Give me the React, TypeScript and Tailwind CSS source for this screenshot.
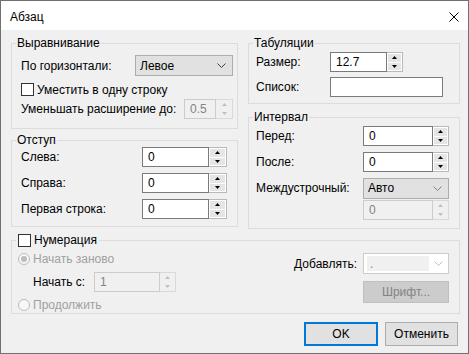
import React from "react";

function Arrow({ up, color }: { up?: boolean; color: string }) {
  return (
    <svg width="5" height="3" viewBox="0 0 5 3" className="block">
      <path d={up ? "M0 3H5L2.5 0Z" : "M0 0H5L2.5 3Z"} fill={color} />
    </svg>
  );
}

function Chevron({ color }: { color: string }) {
  return (
    <svg width="9" height="5" viewBox="0 0 9 5" className="block">
      <path d="M0.5 0.5L4.5 4.5L8.5 0.5" fill="none" stroke={color} strokeWidth="1" />
    </svg>
  );
}

function Spin({ value, tw, sw, disabled }: { value: string; tw: string; sw: string; disabled?: boolean }) {
  return (
    <div className="flex h-[20px]">
      <div
        className={`flex items-center border pl-[5px] ${tw} ${
          disabled ? "border-[#cccccc] bg-[#f0f0f0] text-[#838383]" : "border-[#7a7a7a] bg-white text-black"
        }`}
      >
        {value}
      </div>
      <div
        className={`flex flex-col gap-[1px] border-y border-r p-[1px] ${sw} ${
          disabled ? "border-[#d9d9d9] bg-[#f0f0f0]" : "border-[#b9b9b9] bg-white"
        }`}
      >
        <div className={`flex flex-1 items-center justify-center ${disabled ? "bg-[#f0f0f0]" : "bg-[#e5e5e5]"}`}>
          <Arrow up color={disabled ? "#bfbfbf" : "#000000"} />
        </div>
        <div className={`flex flex-1 items-center justify-center ${disabled ? "bg-[#f0f0f0]" : "bg-[#e5e5e5]"}`}>
          <Arrow color={disabled ? "#bfbfbf" : "#000000"} />
        </div>
      </div>
    </div>
  );
}

function Combo({ value, w, chevron }: { value: string; w: string; chevron: string }) {
  return (
    <div className={`flex h-[21px] items-center justify-between border border-[#adadad] bg-[#e1e1e1] pl-[4px] pr-[6px] ${w}`}>
      <span>{value}</span>
      <Chevron color={chevron} />
    </div>
  );
}

function Group({ title, className, children }: { title: React.ReactNode; className: string; children: React.ReactNode }) {
  return (
    <div className={`relative border border-[#dcdcdc] ${className}`}>
      <span className="absolute -top-[9px] left-[4px] flex items-center bg-[#f0f0f0] px-[1px] leading-[16px]">{title}</span>
      {children}
    </div>
  );
}

function Check() {
  return <span className="inline-block h-[13px] w-[13px] shrink-0 border border-[#333333] bg-white" />;
}

function Radio({ checked }: { checked?: boolean }) {
  return (
    <span className="flex h-[12px] w-[12px] shrink-0 items-center justify-center rounded-full border border-[#bcbcbc] bg-[#f7f7f7]">
      {checked && <span className="h-[6px] w-[6px] rounded-full bg-[#bcbcbc]" />}
    </span>
  );
}

export default function App() {
  return (
    <div className="flex h-[354px] w-[469px] flex-col whitespace-nowrap border border-[#707070] font-['Liberation_Sans',Arial,sans-serif] text-[12px] leading-[16px] text-black">
      {/* Title bar */}
      <div className="flex h-[29px] items-center justify-between bg-white pl-[9px] pr-[9px] pt-[2px]">
        <span className="text-[12px]">Абзац</span>
        <svg width="10" height="10" viewBox="0 0 10 10" className="block">
          <path d="M0.5 0.5L9.5 9.5M9.5 0.5L0.5 9.5" stroke="#000" strokeWidth="1" />
        </svg>
      </div>

      {/* Body */}
      <div className="flex flex-1 flex-col bg-[#f0f0f0] pl-[10px] pr-[8px] pt-[13px]">
        <div className="flex h-[186px] items-start gap-[10px]">
          {/* Left column */}
          <div className="flex w-[227px] flex-col gap-[11px]">
            <Group title="Выравнивание" className="h-[86px]">
              <div className="flex flex-col pl-[9px] pr-[4px] pt-[11px]">
                <div className="flex h-[21px] items-center justify-between">
                  <span>По горизонтали:</span>
                  <Combo value="Левое" w="w-[98px]" chevron="#404040" />
                </div>
                <div className="mt-[7px] flex h-[13px] items-center">
                  <Check />
                  <span className="ml-[3px]">Уместить в одну строку</span>
                </div>
                <div className="mt-[3px] flex h-[20px] items-center justify-between">
                  <span>Уменьшать расширение до:</span>
                  <Spin value="0.5" tw="w-[32px]" sw="w-[17px]" disabled />
                </div>
              </div>
            </Group>

            <Group title="Отступ" className="h-[87px]">
              <div className="flex flex-col gap-[6px] pl-[9px] pr-[10px] pt-[6px]">
                {["Слева:", "Справа:", "Первая строка:"].map((l) => (
                  <div key={l} className="flex h-[20px] items-center justify-between">
                    <span>{l}</span>
                    <Spin value="0" tw="w-[67px]" sw="w-[18px]" />
                  </div>
                ))}
              </div>
            </Group>
          </div>

          {/* Right column */}
          <div className="flex w-[212px] flex-col gap-[13px]">
            <Group title="Табуляции" className="h-[61px]">
              <div className="flex flex-col gap-[5px] pl-[7px] pt-[8px]">
                <div className="flex h-[20px] items-center">
                  <span className="w-[74px]">Размер:</span>
                  <Spin value="12.7" tw="w-[57px]" sw="w-[16px]" />
                </div>
                <div className="flex h-[20px] items-center">
                  <span className="w-[74px]">Список:</span>
                  <div className="h-[20px] w-[113px] border border-[#7a7a7a] bg-white" />
                </div>
              </div>
            </Group>

            <Group title="Интервал" className="h-[112px]">
              <div className="flex flex-col pl-[7px] pt-[8px]">
                <div className="flex h-[20px] items-center">
                  <span className="w-[107px]">Перед:</span>
                  <Spin value="0" tw="w-[70px]" sw="w-[16px]" />
                </div>
                <div className="mt-[6px] flex h-[20px] items-center">
                  <span className="w-[107px]">После:</span>
                  <Spin value="0" tw="w-[70px]" sw="w-[16px]" />
                </div>
                <div className="mt-[6px] flex h-[20px] items-center">
                  <span className="w-[107px]">Междустрочный:</span>
                  <Combo value="Авто" w="w-[86px]" chevron="#808080" />
                </div>
                <div className="mt-[2px] flex h-[20px] items-center pl-[107px]">
                  <Spin value="0" tw="w-[70px]" sw="w-[16px]" disabled />
                </div>
              </div>
            </Group>
          </div>
        </div>

        {/* Numbering */}
        <Group
          className="mt-[11px] h-[74px] w-[449px]"
          title={
            <span className="-ml-[1px] flex items-center pl-[2px] pr-[1px]">
              <Check />
              <span className="ml-[3px]">Нумерация</span>
            </span>
          }
        >
          <div className="flex justify-between pl-[6px] pr-[10px]">
            <div className="flex flex-col pt-[10px] text-[#a0a0a0]">
              <div className="flex h-[16px] items-center">
                <Radio checked />
                <span className="ml-[3px]">Начать заново</span>
              </div>
              <div className="mt-[5px] flex h-[20px] items-center pl-[15px]">
                <span className="w-[61px] text-black">Начать с:</span>
                <Spin value="1" tw="w-[66px]" sw="w-[16px]" disabled />
              </div>
              <div className="mt-[5px] flex h-[16px] items-center">
                <Radio />
                <span className="ml-[3px]">Продолжить</span>
              </div>
            </div>
            <div className="flex flex-col items-end pt-[12px]">
              <div className="flex h-[21px] items-center gap-[6px]">
                <span>Добавлять:</span>
                <div className="flex h-[21px] w-[86px] items-center justify-between border border-[#cccccc] bg-white pl-[3px] pr-[5px]">
                  <div className="flex h-[15px] w-[62px] items-center bg-[#f0f0f0] pl-[3px] text-[#838383]">.</div>
                  <Chevron color="#bfbfbf" />
                </div>
              </div>
              <div className="mt-[7px] flex h-[22px] w-[86px] items-center justify-center border border-[#bfbfbf] bg-[#cccccc] text-[#838383]">
                Шрифт...
              </div>
            </div>
          </div>
        </Group>

        {/* Buttons */}
        <div className="mt-[8px] flex justify-end gap-[7px] pr-[2px]">
          <div className="flex h-[24px] w-[74px] items-center justify-center border-2 border-[#0078d7] bg-[#e1e1e1]">OK</div>
          <div className="flex h-[24px] w-[73px] items-center justify-center border border-[#adadad] bg-[#e1e1e1]">Отменить</div>
        </div>
      </div>
    </div>
  );
}
